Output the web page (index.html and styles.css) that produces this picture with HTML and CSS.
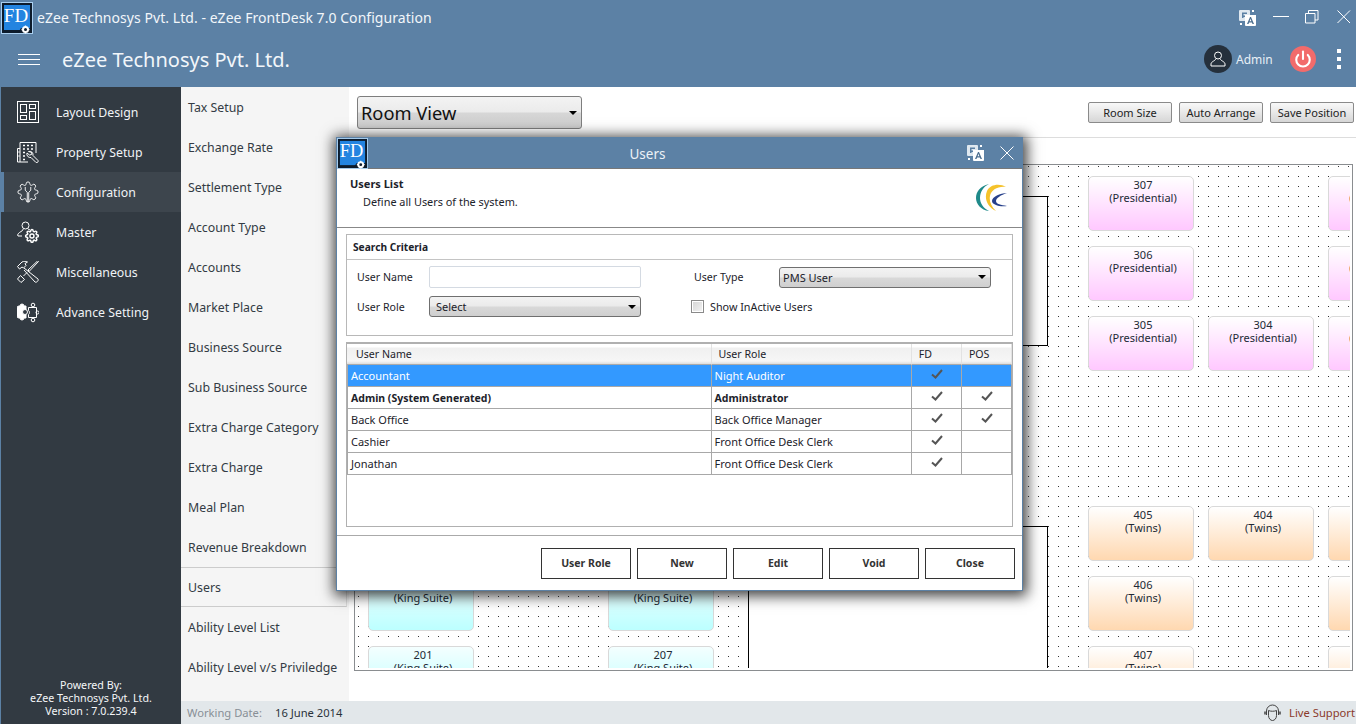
FILE: index.html
```html
<!DOCTYPE html>
<html lang="en">
<head>
<meta charset="utf-8">
<title>eZee FrontDesk 7.0 Configuration</title>
<link rel="stylesheet" href="styles.css">
</head>
<body>
<svg class="defs" width="0" height="0" aria-hidden="true">
  <defs>
    <symbol id="fd" viewBox="0 0 32 32">
      <rect x=".5" y=".5" width="31" height="31" fill="#0d1b2b" stroke="#a9cff0"/>
      <rect x="3" y="3" width="26" height="25" fill="#2384e0"/>
      <text x="15" y="20" text-anchor="middle" class="fd-text">FD</text>
      <path d="M17 31l3-5h11v5z" fill="#0d1b2b"/>
      <circle cx="24.500" cy="27.500" r="2.500" fill="#0d1b2b" stroke="#fff" stroke-width="2"/>
      <path d="M24.500 23.500v1.500M24.500 30v1.500M20.500 27.500h1.500M27 27.500h1.500" stroke="#fff" stroke-width="1.300"/>
    </symbol>
    <symbol id="translate" viewBox="0 0 17 16">
      <rect x="0" y="0" width="11" height="11" rx="1" fill="#dfe8f0"/>
      <path d="M3 2.500h5v1.500h-3.500v1.500h3v1.500h-3v1h-1.500z" fill="#5b80a4"/>
      <path d="M6 5h11v10a1 1 0 0 1-1 1h-9a1 1 0 0 1-1-1z" fill="#fff"/>
      <path d="M8 14l3-7h1l3 7h-1.500l-.6-1.600h-2.800l-.6 1.600zM10.600 11.200h1.800l-.9-2.400z" fill="#4d6f90"/>
      <rect x="13" y="0" width="2" height="2" fill="#fff"/>
      <rect x="1" y="13" width="2" height="2" fill="#fff"/>
    </symbol>
    <symbol id="check" viewBox="0 0 12 10">
      <path d="M1 5.500l3.500 3L11 1" fill="none" stroke="#555" stroke-width="2"/>
    </symbol>
    <path id="gear" d="M19.400 15a1.650 1.650 0 0 0 .33 1.820l.06.06a2 2 0 0 1 0 2.830 2 2 0 0 1-2.830 0l-.06-.06a1.650 1.650 0 0 0-1.820-.33 1.650 1.650 0 0 0-1 1.510V21a2 2 0 0 1-2 2 2 2 0 0 1-2-2v-.09A1.650 1.650 0 0 0 9 19.400a1.650 1.650 0 0 0-1.820.33l-.06.06a2 2 0 0 1-2.830 0 2 2 0 0 1 0-2.830l.06-.06a1.650 1.650 0 0 0 .33-1.820 1.650 1.650 0 0 0-1.510-1H3a2 2 0 0 1-2-2 2 2 0 0 1 2-2h.09A1.650 1.650 0 0 0 4.600 9a1.650 1.650 0 0 0-.33-1.820l-.06-.06a2 2 0 0 1 0-2.830 2 2 0 0 1 2.830 0l.06.06a1.650 1.650 0 0 0 1.820.33H9a1.650 1.650 0 0 0 1-1.510V3a2 2 0 0 1 2-2 2 2 0 0 1 2 2v.09a1.650 1.650 0 0 0 1 1.510 1.650 1.650 0 0 0 1.820-.33l.06-.06a2 2 0 0 1 2.830 0 2 2 0 0 1 0 2.830l-.06.06a1.650 1.650 0 0 0-.33 1.820V9a1.650 1.650 0 0 0 1.510 1H21a2 2 0 0 1 2 2 2 2 0 0 1-2 2h-.09a1.650 1.650 0 0 0-1.510 1z"/>
  </defs>
</svg>

<div class="app">
  <header class="head">
    <div class="titlebar">
      <svg class="fd-icon"><use href="#fd"/></svg>
      <span class="window-title">eZee Technosys Pvt. Ltd. - eZee FrontDesk 7.0 Configuration</span>
      <div class="win-controls">
        <svg class="translate-icon"><use href="#translate"/></svg>
        <svg class="win-btn" viewBox="0 0 16 16"><path d="M0 6.500h16" stroke="#fff" fill="none"/></svg>
        <svg class="win-btn" viewBox="0 0 16 16"><path d="M.5 3.500h9.500v9.500H.5zM3.500 3.500V.5H13V10h-3" stroke="#fff" fill="none"/></svg>
        <svg class="win-btn" viewBox="0 0 16 16"><path d="M.5 .5l12.500 12.500M13 .5L.5 13" stroke="#fff" fill="none"/></svg>
      </div>
    </div>
    <div class="brandbar">
      <div class="hamburger"><span></span><span></span><span></span></div>
      <span class="brand">eZee Technosys Pvt. Ltd.</span>
      <div class="account">
        <div class="avatar">
          <svg width="16" height="16" viewBox="0 0 16 16" fill="none" stroke="#fff"><circle cx="8" cy="4.500" r="3.500"/><path d="M5.500 8c.5 1.500-4.500 2.500-4.500 5v2h14v-2c0-2.500-5-3.500-4.500-5"/></svg>
        </div>
        <span class="admin">Admin</span>
        <div class="power">
          <svg width="18" height="18" viewBox="0 0 24 24" fill="none" stroke="#fff" stroke-width="2.800" stroke-linecap="round"><path d="M18.360 6.640a9 9 0 1 1-12.730 0"/><path d="M12 2v10"/></svg>
        </div>
        <div class="kebab"><span></span><span></span><span></span></div>
      </div>
    </div>
  </header>

  <div class="workspace">
    <nav class="side">
      <ul class="side-list">
        <li class="side-item">
          <svg class="side-icon" viewBox="0 0 22 22"><rect x=".5" y=".5" width="21" height="21"/><rect x="3.500" y="3.500" width="6" height="8"/><rect x="12.500" y="3.500" width="6" height="4"/><rect x="3.500" y="14.500" width="6" height="4"/><rect x="12.500" y="10.500" width="6" height="8"/></svg>
          Layout Design
        </li>
        <li class="side-item">
          <svg class="side-icon" viewBox="0 0 22 22"><path d="M.5 21V7.500H3M3 21V1.500h16V12M.5 21H11"/><path class="thick" d="M6 4.500h2M10 4.500h2M14 4.500h2M6 8h2M10 8h2M14 8h2M1.500 11h1M1.500 15h1M6 11.500h2M6 15h2M6 18.500h2"/><path d="M11.500 10.500a3.500 3.500 0 0 1 4.500 4l5 5a1.500 1.500 0 0 1-2 2l-5-5a3.500 3.500 0 0 1-4-4.500l2.500 2 2-.5.500-2z"/></svg>
          Property Setup
        </li>
        <li class="side-item active">
          <svg class="side-icon" viewBox="0 0 24 24"><use href="#gear"/><path d="M9 6.500v3.500l2.200 2.500V23M15 6.500v3.500l-2.200 2.500V23"/></svg>
          Configuration
        </li>
        <li class="side-item">
          <svg class="side-icon" viewBox="0 0 22 22"><circle cx="8.500" cy="4.500" r="3.500"/><path d="M6 8c.5 1.500-1.500 2-3.500 3.500-1 .8-2.500 2-1.500 3.500h4M11 8l2 1"/><g transform="translate(8 8) scale(.58)" stroke-width="2.500"><use href="#gear"/><circle cx="12" cy="12" r="3.500"/></g></svg>
          Master
        </li>
        <li class="side-item">
          <svg class="side-icon" viewBox="0 0 22 22"><path d="M21.500 .5l-9 9.500M21.500 .5l-1-.5-9.500 9 1.500 1.500M10 11.500l-3.500 3.500M3.500 14.500l4 4-3.500 3-3.500-3.500zM.5 5.500L5 1c2-1 4-1 5.500 0L8 2.500l1 2-2.500 2.500-1.500-1-2.500 2zM7 7l14 11c1 1.500-1.500 4-3 3L7 9"/></svg>
          Miscellaneous
        </li>
        <li class="side-item">
          <svg class="side-icon" viewBox="0 0 22 22"><path class="solid" d="M0 7a2 2 0 0 1 2-2h1a2 2 0 1 1 4 0h2v12H7a2 2 0 1 1-4 0H2a2 2 0 0 1-2-2z"/><circle class="hole" cx="8" cy="11" r="2.500"/><path d="M11.500 6.500h8v10h-8v-3a2.500 2.500 0 0 0 0-4z"/><circle cx="16" cy="4" r="1.800"/><circle cx="16" cy="19" r="1.800"/><circle cx="20.500" cy="11.500" r="1.500"/></svg>
          Advance Setting
        </li>
      </ul>
      <div class="powered">
        <p>Powered By:</p>
        <p>eZee Technosys Pvt. Ltd.</p>
        <p>Version : 7.0.239.4</p>
      </div>
    </nav>

    <div class="content">
      <div class="mid">
        <ul class="sub">
          <li class="sub-item">Tax Setup</li>
          <li class="sub-item">Exchange Rate</li>
          <li class="sub-item">Settlement Type</li>
          <li class="sub-item">Account Type</li>
          <li class="sub-item">Accounts</li>
          <li class="sub-item">Market Place</li>
          <li class="sub-item">Business Source</li>
          <li class="sub-item">Sub Business Source</li>
          <li class="sub-item">Extra Charge Category</li>
          <li class="sub-item">Extra Charge</li>
          <li class="sub-item">Meal Plan</li>
          <li class="sub-item">Revenue Breakdown</li>
          <li class="sub-item current">Users</li>
          <li class="sub-item">Ability Level List</li>
          <li class="sub-item">Ability Level v/s Priviledge</li>
        </ul>
        <main class="main">
          <div class="toolbar">
            <div class="view-select">Room View<i class="caret"></i></div>
            <div class="tool-buttons">
              <button class="tool-btn">Room Size</button>
              <button class="tool-btn">Auto Arrange</button>
              <button class="tool-btn">Save Position</button>
            </div>
          </div>
          <div class="canvas">
            <div class="canvas-inner">
              <div class="block block-a"></div>
              <div class="block block-b"></div>
              <div class="room pink c3 r1">307<br>(Presidential)</div>
              <div class="room pink c3 r2">306<br>(Presidential)</div>
              <div class="room pink c3 r3">305<br>(Presidential)</div>
              <div class="room pink c4 r3">304<br>(Presidential)</div>
              <div class="room pink c5 r1">308<br>(Presidential)</div>
              <div class="room pink c5 r2">309<br>(Presidential)</div>
              <div class="room pink c5 r3">303<br>(Presidential)</div>
              <div class="room peach c3 r4">405<br>(Twins)</div>
              <div class="room peach c4 r4">404<br>(Twins)</div>
              <div class="room peach c5 r4">403<br>(Twins)</div>
              <div class="room peach c3 r5">406<br>(Twins)</div>
              <div class="room peach c5 r5">402<br>(Twins)</div>
              <div class="room peach c3 r6">407<br>(Twins)</div>
              <div class="room peach c5 r6">401<br>(Twins)</div>
              <div class="room aqua c1 r5">202<br>(King Suite)</div>
              <div class="room aqua c2 r5">206<br>(King Suite)</div>
              <div class="room aqua c1 r6">201<br>(King Suite)</div>
              <div class="room aqua c2 r6">207<br>(King Suite)</div>
            </div>
          </div>
        </main>
      </div>
      <footer class="status">
        <span class="wd-label">Working Date:</span>
        <span class="wd-value">16 June 2014</span>
        <span class="support">
          <svg width="17" height="18" viewBox="0 0 17 18" fill="none" stroke="#444"><path d="M2.500 11V7a6 6 0 0 1 12 0v4"/><path d="M4.500 6.500c2 1 6 1 8 0v5c0 3-2 5-4 5s-4-2-4-5z"/><path d="M1 7.500v3M16 7.500v3" stroke-width="1.500"/></svg>
          Live Support
        </span>
      </footer>
    </div>
  </div>

  <section class="dialog">
    <div class="dlg-title">
      <svg class="dlg-fd"><use href="#fd"/></svg>
      <span class="dlg-name">Users</span>
      <svg class="dlg-translate"><use href="#translate"/></svg>
      <svg class="dlg-close" viewBox="0 0 14 14"><path d="M.5 .5l13 13M13.500 .5l-13 13" stroke="#fff" fill="none"/></svg>
    </div>
    <div class="dlg-head">
      <div>
        <h2 class="dlg-h">Users List</h2>
        <p class="dlg-sub">Define all Users of the system.</p>
      </div>
      <svg class="dlg-logo" viewBox="0 0 32 28">
        <path d="M13 0C4 2 0 8 0 14c0 6 5 12 13 13C7 24 4 19 4 14 4 8 7 3 13 0z" fill="#1f8a8a"/>
        <path d="M30 3C24-1 14 0 11 7c-3 7 0 16 9 20-5-5-7-10-6-15 1-6 8-10 16-9z" fill="#f5c22b"/>
        <path d="M31 9c-7 0-15 4-15 8s8 6 15 5c-6-1-11-2-11-5s5-6 11-8z" fill="#27408b"/>
      </svg>
    </div>
    <div class="dlg-body">
      <fieldset class="criteria">
        <div class="criteria-title">Search Criteria</div>
        <div class="criteria-form">
          <label class="lbl">User Name</label>
          <div class="text-input"></div>
          <label class="lbl lbl-right">User Type</label>
          <div class="combo combo-pms">PMS User<i class="caret"></i></div>
          <label class="lbl">User Role</label>
          <div class="combo combo-role">Select<i class="caret"></i></div>
          <label class="check-line"><i class="checkbox"></i>Show InActive Users</label>
        </div>
      </fieldset>
      <div class="grid-wrap">
        <table class="grid">
          <colgroup><col class="c-name"><col class="c-role"><col class="c-flag"><col class="c-flag"></colgroup>
          <thead>
            <tr><th>User Name</th><th>User Role</th><th>FD</th><th>POS</th></tr>
          </thead>
          <tbody>
            <tr class="selected"><td>Accountant</td><td>Night Auditor</td><td class="flag"><svg class="tick"><use href="#check"/></svg></td><td></td></tr>
            <tr class="system"><td>Admin (System Generated)</td><td>Administrator</td><td class="flag"><svg class="tick"><use href="#check"/></svg></td><td class="flag"><svg class="tick"><use href="#check"/></svg></td></tr>
            <tr><td>Back Office</td><td>Back Office Manager</td><td class="flag"><svg class="tick"><use href="#check"/></svg></td><td class="flag"><svg class="tick"><use href="#check"/></svg></td></tr>
            <tr><td>Cashier</td><td>Front Office Desk Clerk</td><td class="flag"><svg class="tick"><use href="#check"/></svg></td><td></td></tr>
            <tr><td>Jonathan</td><td>Front Office Desk Clerk</td><td class="flag"><svg class="tick"><use href="#check"/></svg></td><td></td></tr>
          </tbody>
        </table>
      </div>
    </div>
    <div class="dlg-actions">
      <button class="dlg-btn">User Role</button>
      <button class="dlg-btn">New</button>
      <button class="dlg-btn">Edit</button>
      <button class="dlg-btn">Void</button>
      <button class="dlg-btn">Close</button>
    </div>
  </section>
</div>
</body>
</html>
```
FILE: styles.css
```css
* { box-sizing: border-box; }
html, body { margin: 0; padding: 0; }
body { font-family: "Noto Sans", "Open Sans", sans-serif; background: #fff; }
ul { list-style: none; margin: 0; padding: 0; }
p, h2, fieldset { margin: 0; padding: 0; border: 0; }
button { font-family: inherit; cursor: default; }
.defs { position: absolute; }
.fd-text { font-family: "Liberation Serif", serif; font-size: 19px; fill: #fff; }

.app { position: relative; width: 1356px; height: 724px; overflow: hidden; display: flex; flex-direction: column; }

/* header */
.head { height: 87px; flex: none; background: #5c81a5; color: #fff; }
.titlebar { height: 35px; display: flex; align-items: center; padding: 1px 3px 0 1px; }
.fd-icon { width: 32px; height: 32px; flex: none; }
.window-title { margin-left: 4px; margin-top: -2px; font-size: 14px; letter-spacing: .05px; color: #f2f6fa; }
.win-controls { margin-left: auto; display: flex; align-items: center; gap: 16px; }
.translate-icon { width: 17px; height: 16px; margin-right: 1px; }
.win-btn { width: 16px; height: 16px; }
.brandbar { height: 52px; display: flex; align-items: center; padding: 0 15px 4px 18px; }
.hamburger { width: 22px; display: flex; flex-direction: column; gap: 4px; }
.hamburger span { height: 1px; background: #fff; }
.brand { margin-left: 22px; font-size: 20px; color: #f2f6fa; }
.account { margin-left: auto; display: flex; align-items: center; }
.avatar { width: 28px; height: 28px; border-radius: 50%; background: #25303c; display: flex; align-items: center; justify-content: center; }
.admin { margin-left: 4px; width: 54px; font-size: 12px; color: #e8eff6; }
.power { width: 26px; height: 26px; border-radius: 50%; background: #f26b6b; display: flex; align-items: center; justify-content: center; }
.kebab { margin-left: 21px; display: flex; flex-direction: column; gap: 4px; }
.kebab span { width: 4px; height: 4px; background: #fff; }

/* workspace */
.workspace { flex: 1; display: flex; min-height: 0; }
.side { width: 181px; flex: none; background: #323a42; border-left: 1px solid #5c81a5; padding-top: 5px; display: flex; flex-direction: column; }
.side-item { height: 40px; display: flex; align-items: center; gap: 17px; padding-left: 16px; color: #f0f3f6; font-size: 12.300px; }
.side-item.active { background: #3d454d; border-left: 3px solid #5c81a5; padding-left: 13px; }
.side-icon { width: 22px; height: 22px; flex: none; fill: none; stroke: #fff; stroke-width: 1; }
.side-icon .thick { stroke-width: 1.500; }
.side-icon .solid { fill: #fff; }
.side-icon .hole { fill: #323a42; }
.powered { margin-top: auto; padding-bottom: 6px; text-align: center; color: #f4f6f8; font-size: 10.700px; line-height: 13px; }

.content { flex: 1; min-width: 0; display: flex; flex-direction: column; }
.mid { flex: 1; display: flex; min-height: 0; }
.sub { width: 168px; flex: none; background: #f5f5f5; }
.sub-item { height: 40px; display: flex; align-items: center; padding-left: 7px; font-size: 12.350px; color: #333b44; }
.sub-item.current { margin-right: 2px; border-top: 1px solid #ccc; border-bottom: 1px solid #ccc; border-right: 1px solid #ddd; }

.main { flex: 1; min-width: 0; background: #fff; display: flex; flex-direction: column; }
.toolbar { height: 51px; flex: none; display: flex; padding: 9px 2px 0 8px; border-bottom: 1px solid #ddd; }
.view-select { position: relative; width: 225px; height: 33px; border: 1px solid #7e7e7e; border-radius: 3px; background: linear-gradient(#f3f3f3 0, #ebebeb 48%, #d6d6d6 52%, #cdcdcd 100%); font-size: 18.300px; line-height: 31px; padding-left: 3px; color: #111; }
.caret { position: absolute; right: 4px; top: 50%; margin-top: -2px; border: 4px solid transparent; border-top-color: #000; border-bottom: 0; }
.tool-buttons { margin-left: auto; display: flex; gap: 7px; padding-top: 6px; }
.tool-btn { width: 84px; height: 21px; padding: 0; border: 1px solid #8a8a8a; border-radius: 2px; background: linear-gradient(#f8f8f8, #e8e8e8 50%, #d6d6d6); font-size: 11px; color: #222; }

.canvas { margin: 26px 3px 30px 5px; flex: 1; min-height: 0; border: 1px solid #8a8d90; padding: 0 2px 2px 0; }
.canvas-inner { position: relative; width: 100%; height: 100%; overflow: hidden; background-color: #fff; background-image: conic-gradient(at 1px 1px, transparent 75%, #333 0); background-size: 10px 10px; background-position: 3px 1px; }
.block { position: absolute; left: 393px; width: 300px; background: #fff; border: 1px solid #000; }
.block-a { top: 31px; height: 150px; }
.block-b { top: 361px; height: 200px; }
.room { position: absolute; width: 106px; height: 55px; padding: 1px 0 0 4px; border: 1px solid #d9d9d9; border-radius: 5px; text-align: center; font-size: 11px; line-height: 13px; color: #222a35; }
.pink { background: linear-gradient(#fff, #ffc8ff); }
.peach { background: linear-gradient(#fff, #ffd8b0); }
.aqua { background: linear-gradient(#f4ffff, #bcffff); }
.c1 { left: 13px; } .c2 { left: 253px; } .c3 { left: 733px; } .c4 { left: 853px; } .c5 { left: 973px; }
.r1 { top: 11px; } .r2 { top: 81px; } .r3 { top: 151px; } .r4 { top: 341px; } .r5 { top: 411px; } .r6 { top: 481px; }

.status { height: 23px; flex: none; background: #e2e7ea; display: flex; align-items: center; padding: 0 1px 0 6px; font-size: 11.200px; }
.wd-label { width: 88px; color: #888f96; }
.wd-value { color: #2a323a; }
.support { margin-left: auto; display: flex; align-items: center; gap: 8px; color: #8a3a2a; }

/* dialog */
.dialog { position: absolute; left: 336px; top: 137px; width: 687px; height: 454px; background: #fff; border: 1px solid #5c81a5; box-shadow: 1px 2px 13px 3px rgba(0,0,0,.75); display: flex; flex-direction: column; font-size: 11px; color: #1c222a; }
.dlg-title { position: relative; height: 31px; flex: none; background: #5c81a5; border-bottom: 1px solid #777; display: flex; align-items: center; justify-content: center; padding-right: 64px; }
.dlg-fd { position: absolute; left: 0; top: 0; width: 31px; height: 31px; }
.dlg-name { margin-top: 2px; color: #edf2f7; font-size: 13.500px; }
.dlg-translate { position: absolute; right: 38px; top: 7px; width: 17px; height: 16px; }
.dlg-close { position: absolute; right: 8px; top: 8px; width: 14px; height: 14px; }
.dlg-head { height: 59px; flex: none; border-bottom: 1px solid #888; display: flex; justify-content: space-between; padding: 7px 14px 0 13px; }
.dlg-h { font-size: 11px; font-weight: 700; line-height: 15px; }
.dlg-sub { margin-top: 3px; padding-left: 13px; line-height: 15px; font-size: 10.900px; }
.dlg-logo { width: 32px; height: 28px; margin-top: 8px; }
.dlg-body { flex: 1; padding: 6px 9px 0; min-height: 0; }
.criteria { width: 667px; height: 102px; border: 1px solid #b8b8b8; }
.criteria-title { height: 25px; padding-left: 6px; line-height: 24px; font-size: 10.200px; font-weight: 700; border-bottom: 1px solid #c4c4c4; }
.criteria-form { display: grid; grid-template-columns: 72px 212px 85px 212px; row-gap: 8px; padding: 6px 0 0 10px; grid-template-rows: 22px 22px; align-items: center; }
.lbl { line-height: 22px; font-size: 10.600px; }
.lbl-right { margin-left: 53px; width: 85px; }
.text-input { height: 22px; border: 1px solid #d4dae2; border-radius: 2px; background: #fff; }
.combo { position: relative; height: 21px; border: 1px solid #6f6f6f; border-radius: 3px; background: linear-gradient(#f3f3f3 0, #ebebeb 45%, #d8d8d8 55%, #cfcfcf 100%); padding-left: 6px; line-height: 19px; }
.combo-pms { margin-left: 53px; width: 212px; padding-left: 3px; }
.combo-role { align-self: start; }
.check-line { grid-column: 3 / 5; margin: -1px 0 0 50px; display: flex; align-items: center; gap: 6px; font-size: 10.800px; }
.checkbox { width: 13px; height: 13px; border: 1px solid #8a8a8a; background: linear-gradient(135deg, #d4d4d4, #f4f4f4); box-shadow: inset 0 0 0 1px #fff; }
.grid-wrap { width: 667px; height: 185px; margin-top: 6px; border: 1px solid #b0b0b0; border-top-width: 2px; }
.grid { border-collapse: separate; border-spacing: 0; table-layout: fixed; width: 665px; }
.c-name { width: 364px; } .c-role { width: 200px; } .c-flag { width: 50px; }
.grid th { height: 21px; padding: 0 0 1px 9px; font-size: 10.600px; font-weight: 400; text-align: left; background: linear-gradient(#fff 0, #fff 15%, #f0f0f0 20%, #f6f6f6 85%, #ddd 100%); border-right: 1px solid #e2e2e2; border-bottom: 1px solid #aaa; }
.grid th + th { padding-left: 7px; }
.grid td { height: 22px; padding: 0 0 0 3px; border-right: 1px solid #a8a8a8; border-bottom: 1px solid #a8a8a8; }
.grid td:first-child { border-left: 1px solid #a8a8a8; }
.grid td.flag { padding: 0; text-align: center; }
.selected td { background: #3399ff; color: #fff; }
.system td { font-weight: 700; font-size: 10.500px; }
.tick { display: block; width: 12px; height: 10px; margin: 0 auto 3px; position: relative; left: 1px; }
.dlg-actions { height: 55px; flex: none; border-top: 1px solid #aaa; display: flex; justify-content: flex-end; gap: 6px; padding: 12px 7px 0 0; }
.dlg-btn { width: 90px; height: 31px; padding: 0 0 2px; background: #fff; border: 1px solid #333; font-size: 10.500px; font-weight: 700; color: #333; }
```
